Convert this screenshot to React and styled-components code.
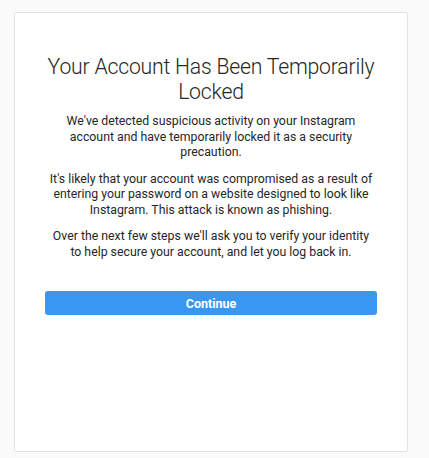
import React from "react";
import styled, { createGlobalStyle } from "styled-components";

const Global = createGlobalStyle`
  html, body { margin: 0; padding: 0; background: #fafafa; }
  body { font-family: "Roboto", "Liberation Sans", Arial, sans-serif; }
`;

const Page = styled.div`
  padding: 12px 21px 6px 14px;
  box-sizing: border-box;
  width: 429px;
  height: 458px;
`;

const Card = styled.div`
  box-sizing: border-box;
  width: 394px;
  height: 440px;
  background: #fff;
  border: 1px solid #e3e3e3;
  border-radius: 2px;
  display: flex;
  flex-direction: column;
  align-items: center;
  padding: 41px 30px 0;
`;

const Title = styled.h1`
  margin: 0 0 10px;
  font-weight: 300;
  font-size: 21.2px;
  line-height: 25px;
  color: #262626;
  text-align: center;
  letter-spacing: -0.2px;
`;

const Para = styled.p`
  margin: 0 0 11px;
  font-size: 12.3px;
  line-height: 15.5px;
  color: #262626;
  text-align: center;
  width: 100%;
`;

const Button = styled.button`
  margin-top: 20px;
  width: 332px;
  height: 24px;
  border: none;
  border-radius: 3px;
  background: #3897f0;
  color: #fff;
  font-family: "Roboto", "Liberation Sans", Arial, sans-serif;
  font-weight: 700;
  font-size: 12.5px;
  cursor: pointer;
`;

export default function App() {
  return (
    <>
      <Global />
      <Page>
        <Card>
          <Title>
            Your Account Has Been Temporarily
            <br />
            Locked
          </Title>
          <Para>
            We've detected suspicious activity on your Instagram
            <br />
            account and have temporarily locked it as a security
            <br />
            precaution.
          </Para>
          <Para>
            It's likely that your account was compromised as a result of
            <br />
            entering your password on a website designed to look like
            <br />
            Instagram. This attack is known as phishing.
          </Para>
          <Para>
            Over the next few steps we'll ask you to verify your identity
            <br />
            to help secure your account, and let you log back in.
          </Para>
          <Button>Continue</Button>
        </Card>
      </Page>
    </>
  );
}
